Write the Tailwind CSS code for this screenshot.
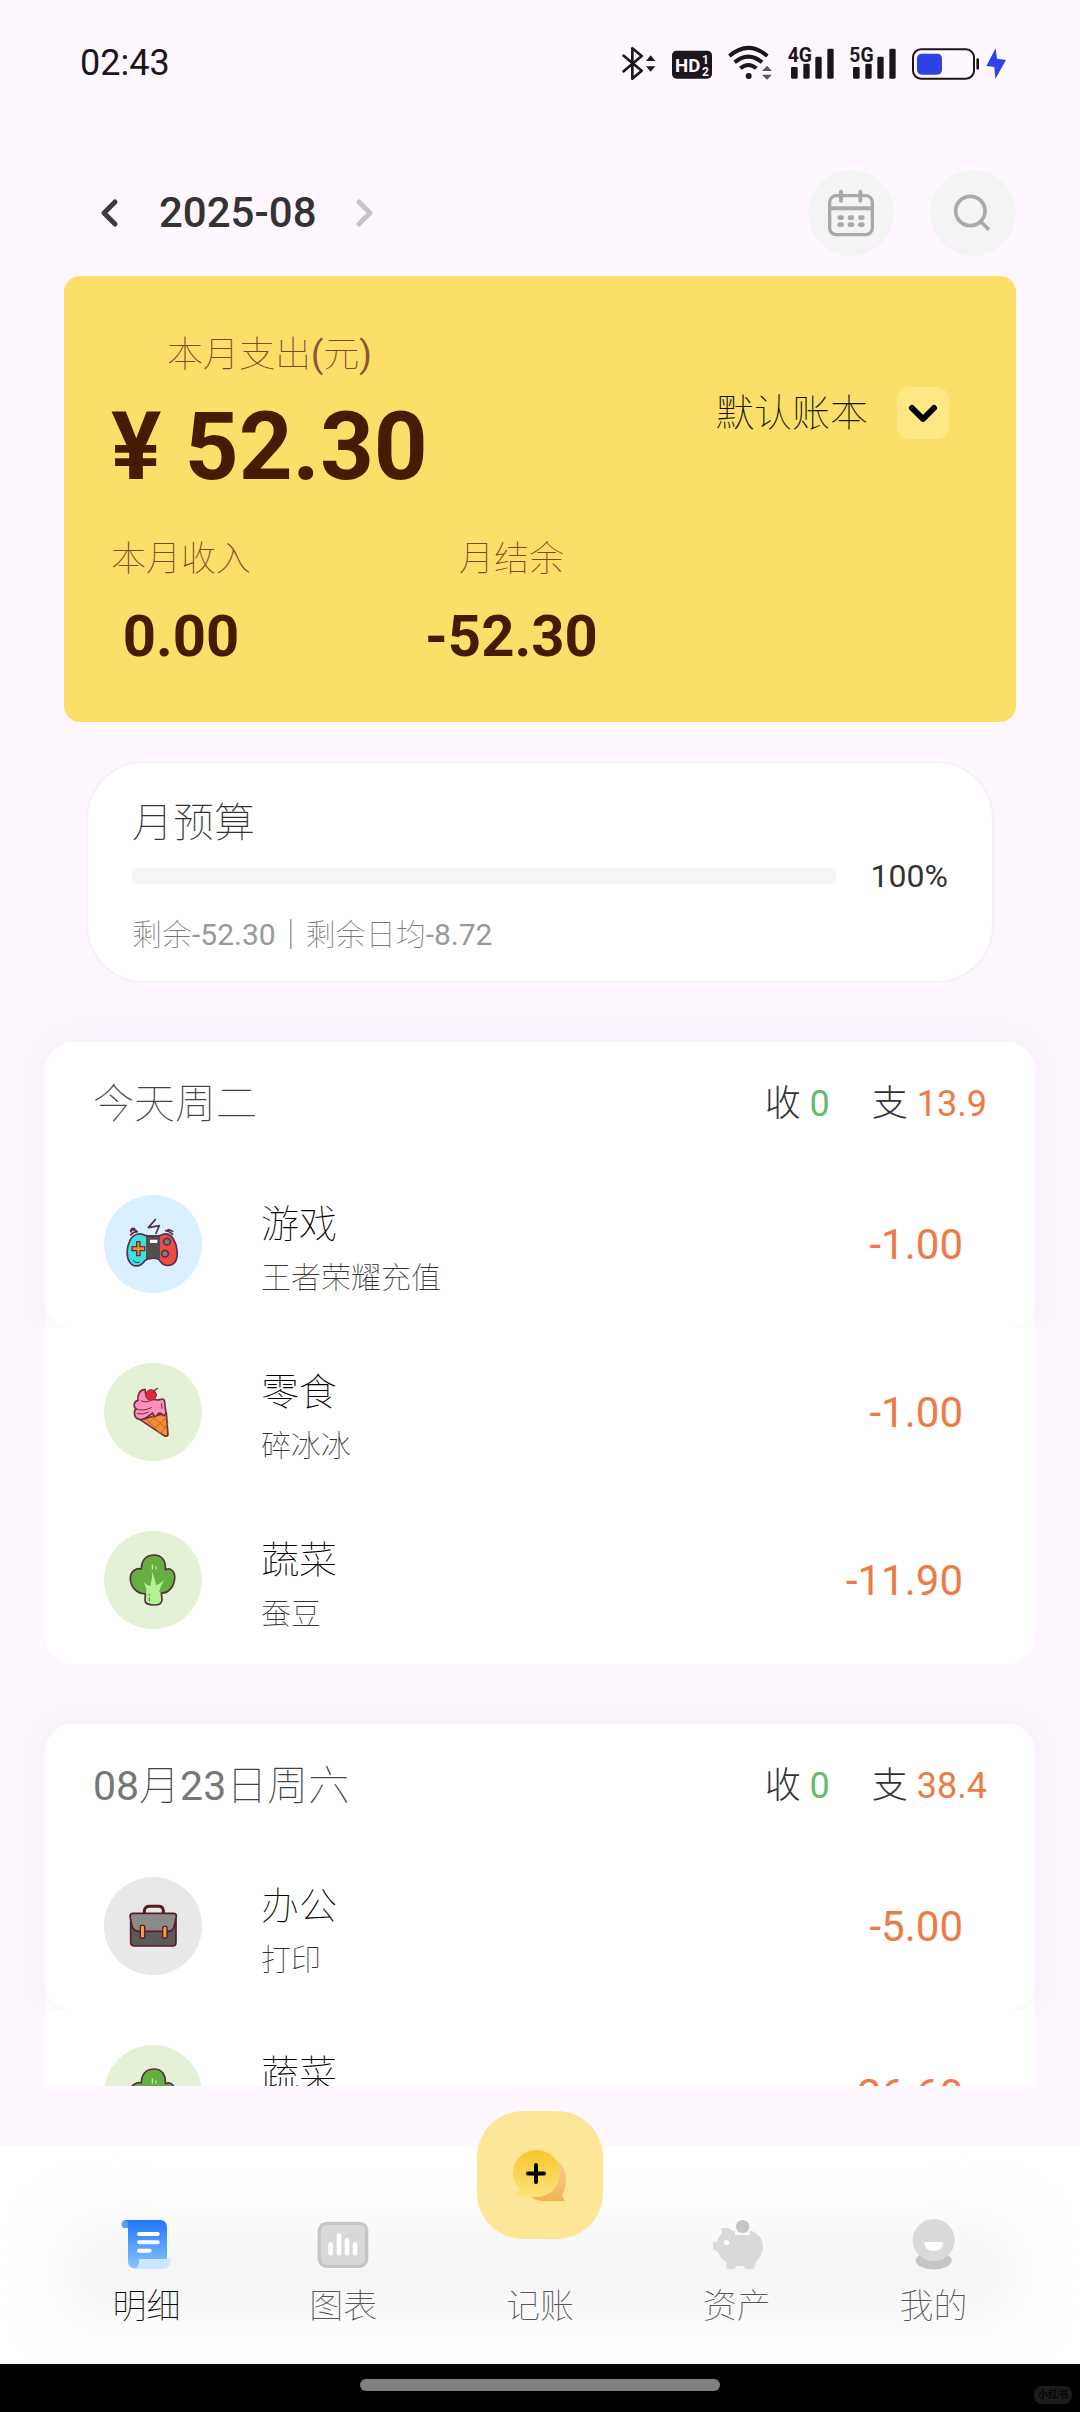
<!DOCTYPE html>
<html lang="zh-CN">
<head>
  <meta charset="UTF-8" />
  <meta name="viewport" content="width=device-width, initial-scale=1" />
  <title>记账</title>
  <script src="https://cdn.jsdelivr.net/npm/@tailwindcss/browser@4"></script>
</head>
<body class="h-screen flex flex-col overflow-hidden bg-[#fef7ff] font-['Roboto','Noto_Sans_CJK_SC',sans-serif] text-[#333333]">

  <!-- 图标 -->
  <svg class="hidden" aria-hidden="true">
    <symbol id="icon-broccoli" viewBox="72 1080 294 294">
      <path d="M196 1268C176 1270 152 1252 151 1224C150 1200 170 1190 184 1194C184 1166 200 1152 222 1152C246 1152 258 1170 256 1196C272 1188 286 1202 284 1222C282 1250 262 1268 244 1266L246 1296Q220 1306 195 1296Z" fill="#66ad42" />
      <path d="M197 1266Q204 1258 190 1232Q204 1246 211 1244Q217 1222 217 1202Q224 1222 228 1242Q238 1240 254 1226Q240 1246 238 1262L246 1268L246 1296Q220 1306 195 1296Z" fill="#b4f096" />
      <path d="M217 1182V1194M228 1188V1194M208 1266V1290" fill="none" stroke="#b4f096" stroke-width="4" stroke-linecap="round" />
      <path d="M208 1268V1274M208 1279V1291" stroke="#3f7d3a" stroke-width="3" />
      <path d="M196 1268C176 1270 152 1252 151 1224C150 1200 170 1190 184 1194C184 1166 200 1152 222 1152C246 1152 258 1170 256 1196C272 1188 286 1202 284 1222C282 1250 262 1268 244 1266L246 1286Q246 1302 222 1302Q195 1302 195 1288Z" fill="none" stroke="#55323d" stroke-width="5" stroke-linejoin="round" />
    </symbol>
  </svg>

  <!-- 状态栏 -->
  <div class="flex h-[126px] shrink-0 items-center justify-between pl-20 pr-[73px] text-[#1a161c]">
    <span class="text-[36px]">02:43</span>
    <div class="flex items-center gap-[14px] font-bold">
      <svg class="h-9 w-[35px]" viewBox="60 70 105 108" fill="none" stroke="currentColor">
        <path d="M65 102L119 147L91 171V80L119 103L65 149" stroke-width="8" stroke-linejoin="round" stroke-linecap="round" />
        <path d="M132 118L146 101L160 118ZM132 134L146 150L160 134Z" fill="currentColor" stroke="none" />
      </svg>
      <svg class="h-9 w-[42px]" viewBox="210 70 126 108">
        <rect x="213" y="87" width="120" height="84" rx="14" fill="currentColor" />
        <g fill="#fef7ff">
          <text x="222" y="152" font-size="56">HD</text>
          <text x="303" y="126" font-size="36">1</text>
          <text x="303" y="162" font-size="36">2</text>
        </g>
      </svg>
      <svg class="h-9 w-[46px]" viewBox="384 70 138 108" fill="none" stroke="currentColor">
        <path d="M391 103Q448 54 505 103M407 122Q448 88 489 122M424 140Q448 120 472 140" stroke-width="12" />
        <circle cx="449" cy="163" r="9" fill="currentColor" stroke="none" />
        <path d="M489 148L504 132L519 148ZM489 159L504 174L519 159Z" fill="#5c585e" stroke="none" />
      </svg>
      <svg class="h-9 w-12" viewBox="558 70 144 108" fill="currentColor">
        <text x="560" y="121" font-size="58">4G</text>
        <rect x="570" y="136" width="20" height="35" rx="4" />
        <rect x="607" y="126" width="19" height="45" rx="4" />
        <rect x="643" y="105" width="19" height="66" rx="4" />
        <rect x="679" y="81" width="19" height="90" rx="4" />
      </svg>
      <svg class="h-9 w-12" viewBox="747 70 144 108" fill="currentColor">
        <text x="748" y="121" font-size="58">5G</text>
        <rect x="759" y="136" width="20" height="35" rx="4" />
        <rect x="796" y="126" width="19" height="45" rx="4" />
        <rect x="832" y="105" width="19" height="66" rx="4" />
        <rect x="868" y="81" width="19" height="90" rx="4" />
      </svg>
      <svg class="h-9 w-24" viewBox="933 70 288 108">
        <rect x="939" y="83" width="183" height="88" rx="24" fill="none" stroke="currentColor" stroke-width="6" />
        <rect x="951" y="96" width="75" height="63" rx="14" fill="#2e42e6" />
        <rect x="1129" y="110" width="8" height="34" rx="4" fill="currentColor" />
        <path d="M1187 80L1159 133L1183 136L1186 172L1218 115L1191 111Z" fill="#2e42e6" />
      </svg>
    </div>
  </div>

  <!-- 月份切换 -->
  <header class="mt-11 mb-5 flex shrink-0 items-center justify-between pl-[94px] pr-16">
    <div class="flex items-center gap-[33px]">
      <button type="button" aria-label="上个月" class="text-[#3c3c44]">
        <svg class="h-8 w-8" viewBox="0 0 32 32" fill="none" stroke="currentColor" stroke-width="5" stroke-linecap="round" stroke-linejoin="round"><path d="M21 5L10 16L21 27" /></svg>
      </button>
      <h1 class="text-[42px] font-medium leading-[48px]">2025-08</h1>
      <button type="button" aria-label="下个月" class="text-[#c6c4ca]">
        <svg class="h-8 w-8" viewBox="0 0 32 32" fill="none" stroke="currentColor" stroke-width="5" stroke-linecap="round" stroke-linejoin="round"><path d="M9 5L20 16L9 27" /></svg>
      </button>
    </div>
    <div class="flex gap-9 text-[#a9a9a9]">
      <button type="button" aria-label="日历" class="h-[86px] w-[86px] rounded-full bg-[#f4f4f4]">
        <svg class="h-full w-full" viewBox="84 90 258 258" fill="none" stroke="currentColor" stroke-width="10" stroke-linecap="round">
          <rect x="149" y="167" width="128" height="117" rx="20" />
          <path d="M150 205H276M183 155V182M241 155V182" stroke-width="12" />
          <path d="M179 233H185M210 233H216M241 233H247M179 254H185M210 254H216M241 254H247" stroke-width="14" />
        </svg>
      </button>
      <button type="button" aria-label="搜索" class="h-[86px] w-[86px] rounded-full bg-[#f4f4f4]">
        <svg class="h-full w-full" viewBox="449 90 258 258" fill="none" stroke="currentColor" stroke-width="11">
          <circle cx="570" cy="213" r="44" />
          <path d="M602 246L626 269" />
        </svg>
      </button>
    </div>
  </header>

  <!-- 本月汇总 -->
  <section class="mx-16 shrink-0 rounded-2xl bg-[#fcdf69] pt-[55px] pb-[54px] pl-[47px] pr-[67px] text-[#7c4628]">
    <div class="flex items-center justify-between">
      <div class="text-center">
        <p class="text-[36px] font-thin leading-[48px]">本月支出<span class="font-normal text-[#8a5634]">(</span>元<span class="font-normal text-[#8a5634]">)</span></p>
        <p class="mt-5 text-[94px] font-bold leading-[96px] text-[#471a02]">¥ 52.30</p>
      </div>
      <div class="relative text-[#111111]">
        <select aria-label="账本" class="h-[52px] appearance-none bg-transparent pr-[80px] text-[38px] font-thin leading-[52px] outline-none">
          <option>默认账本</option>
        </select>
        <span class="pointer-events-none absolute top-0 right-0 flex h-[52px] w-[52px] items-center justify-center rounded-xl bg-[#ffe883]">
          <svg class="h-8 w-8" viewBox="0 0 32 32" fill="none" stroke="#000000" stroke-width="6" stroke-linecap="round" stroke-linejoin="round"><path d="M5 11L16 22L27 11" /></svg>
        </span>
      </div>
    </div>
    <div class="mt-[41px] flex gap-[174px] text-center">
      <div>
        <p class="text-[35px] font-thin leading-[48px]">本月收入</p>
        <p class="mt-5 text-[58px] font-bold leading-[64px] text-[#471a02]">0.00</p>
      </div>
      <div>
        <p class="text-[35px] font-thin leading-[48px]">月结余</p>
        <p class="mt-5 text-[58px] font-bold leading-[64px] text-[#471a02]">-52.30</p>
      </div>
    </div>
  </section>

  <!-- 月预算 -->
  <section class="mx-[86px] mt-[39px] shrink-0 rounded-[58px] border-2 border-[#f5f1f6] bg-white px-11 pt-8 pb-[26px]">
    <h2 class="text-[41px] font-thin leading-14">月预算</h2>
    <div class="mt-[5px] flex items-center gap-[35px]">
      <div role="progressbar" aria-label="月预算" aria-valuenow="0" aria-valuemin="0" aria-valuemax="100" class="h-4 flex-1 rounded-full bg-[#f6f6f6]"></div>
      <span class="text-[32px] leading-10">100%</span>
    </div>
    <p class="mt-[19px] text-[30px] leading-10 text-[#999999]"><span class="font-thin text-[#777777]">剩余</span>-52.30<span class="font-thin text-[#777777]">｜剩余日均</span>-8.72</p>
  </section>

  <!-- 明细列表 -->
  <main class="min-h-0 flex-1 overflow-hidden px-[45px] pt-[59px]">
    <section class="mb-[60px] rounded-[28px] bg-white">
      <div class="rounded-[28px] bg-white shadow-[0_0_40px_rgba(60,0,100,0.05)]">
        <div class="flex items-center justify-between px-12 pt-8 pb-[26px] leading-[60px]">
          <h2 class="text-[41px] font-thin text-[#444444]">今天周二</h2>
          <p class="flex gap-[42px] text-[36px]">
            <span><span class="font-light">收</span> <span class="text-[#66bb6a]">0</span></span>
            <span><span class="font-light">支</span> <span class="text-[#ec7b45]">13.9</span></span>
          </p>
        </div>
        <div class="flex h-[168px] items-center pl-[59px] pr-[72px]">
          <span class="h-[98px] w-[98px] rounded-full bg-[#dbf0ff]">
            <svg viewBox="72 72 294 294" stroke="#57314a" stroke-linejoin="round" stroke-linecap="round">
              <path d="M198 194C180 184 160 188 150 208C140 228 138 256 148 272C160 292 182 286 192 272Q200 262 216 262Q234 260 242 272C252 286 274 288 286 272C296 256 292 222 280 204C270 186 254 186 240 194Q220 198 198 194Z" fill="#ee4c41" stroke="none" />
              <path d="M198 194C180 184 160 188 150 208C140 228 138 256 148 272C160 292 182 286 198 264Z" fill="#3fe0e0" stroke="none" />
              <path d="M198 192H240V266Q220 258 198 266Z" fill="#54504f" stroke="none" />
              <path d="M198 194C180 184 160 188 150 208C140 228 138 256 148 272C160 292 182 286 192 272Q200 262 216 262Q234 260 242 272C252 286 274 288 286 272C296 256 292 222 280 204C270 186 254 186 240 194Q220 198 198 194Z" fill="none" stroke-width="5" />
              <path d="M170 212H180V227H194V239H180V254H170V239H156V227H170Z" fill="#f58a24" stroke-width="4" />
              <circle cx="261" cy="212" r="10" fill="#817b80" stroke-width="5" />
              <circle cx="255" cy="248" r="10" fill="#817b80" stroke-width="5" />
              <rect x="210" y="206" width="22" height="10" rx="2" fill="#ffffff" stroke="none" />
              <path d="M152 182Q158 174 168 178M152 192Q160 182 172 182M152 178Q156 170 164 173M257 179Q268 180 278 190M264 176Q272 177 278 181M228 187L238 164L205 170L226 146" fill="none" stroke-width="5" />
              <path d="M160 268Q166 278 178 274" fill="none" stroke-width="3" />
            </svg>
          </span>
          <div class="ml-[59px] flex-1 pt-[11px] font-thin">
            <h3 class="text-[38px] leading-14 text-black">游戏</h3>
            <p class="text-[30px] leading-[52px] text-[#333333]">王者荣耀充值</p>
          </div>
          <span class="text-[42px] text-[#ec7b45]">-1.00</span>
        </div>
      </div>
      <div class="relative flex h-[168px] items-center bg-white pl-[59px] pr-[72px]">
        <span class="h-[98px] w-[98px] rounded-full bg-[#e5f1d7]">
          <svg viewBox="72 576 294 294" stroke="#6b3040" stroke-linejoin="round" stroke-linecap="round">
            <path d="M180 746L259 726L264 792Q260 798 252 794Z" fill="#f38f37" stroke-width="5" />
            <path d="M196 742L240 786M216 736L261 774M204 758L234 730M224 772L262 738M242 788L264 756" fill="none" stroke="#c8622b" stroke-width="3" />
            <path d="M196 656C178 654 172 674 174 688C160 690 160 708 168 714C160 720 162 742 176 744Q186 750 202 738Q212 730 218 726Q222 742 232 732Q236 722 246 730Q254 740 258 724Q254 704 254 692Q252 680 240 686Q222 690 204 676Q194 668 196 656Z" fill="#ff8fbb" stroke-width="5" />
            <path d="M184 690Q198 696 210 690M168 714Q190 722 214 710M172 728Q190 732 204 724M244 698L246 712" fill="none" stroke-width="3" />
            <circle cx="213" cy="672" r="16" fill="#ed2636" stroke-width="3" />
            <path d="M220 664Q224 656 232 652" fill="none" stroke-width="4" />
          </svg>
        </span>
        <div class="ml-[59px] flex-1 pt-[11px] font-thin">
          <h3 class="text-[38px] leading-14 text-black">零食</h3>
          <p class="text-[30px] leading-[52px] text-[#333333]">碎冰冰</p>
        </div>
        <span class="text-[42px] text-[#ec7b45]">-1.00</span>
      </div>
      <div class="relative flex h-[168px] items-center rounded-b-[28px] bg-white pl-[59px] pr-[72px]">
        <span class="h-[98px] w-[98px] rounded-full bg-[#e5f1d7]">
          <svg class="h-full w-full"><use href="#icon-broccoli" /></svg>
        </span>
        <div class="ml-[59px] flex-1 pt-[11px] font-thin">
          <h3 class="text-[38px] leading-14 text-black">蔬菜</h3>
          <p class="text-[30px] leading-[52px] text-[#333333]">蚕豆</p>
        </div>
        <span class="text-[42px] text-[#ec7b45]">-11.90</span>
      </div>
    </section>

    <section class="rounded-[28px] bg-white">
      <div class="rounded-[28px] bg-white shadow-[0_0_40px_rgba(60,0,100,0.05)]">
        <div class="flex items-center justify-between px-12 pt-8 pb-[26px] leading-[60px]">
          <h2 class="text-[41px] text-[#777777]">08<span class="font-thin text-[#444444]">月</span>23<span class="font-thin text-[#444444]">日周六</span></h2>
          <p class="flex gap-[42px] text-[36px]">
            <span><span class="font-light">收</span> <span class="text-[#66bb6a]">0</span></span>
            <span><span class="font-light">支</span> <span class="text-[#ec7b45]">38.4</span></span>
          </p>
        </div>
        <div class="flex h-[168px] items-center pl-[59px] pr-[72px]">
          <span class="h-[98px] w-[98px] rounded-full bg-[#e8e8e8]">
            <svg viewBox="132 54 294 294" stroke="#571c24" stroke-linejoin="round">
              <path d="M253 162V154Q256 142 268 142H296Q308 142 310 154V162" fill="none" stroke-width="9" />
              <path d="M212 180V250Q212 261 224 261H338Q348 261 348 250V180Z" fill="#5c5b5b" stroke-width="5" />
              <path d="M210 172Q210 163 220 163H340Q350 163 349 172L342 204Q338 216 324 217H234Q220 214 216 202Z" fill="#8b8a8a" stroke-width="5" />
              <rect x="241" y="199" width="13" height="38" rx="4" fill="#f3a04c" stroke-width="4" />
              <rect x="308" y="202" width="13" height="35" rx="4" fill="#f3a04c" stroke-width="4" />
            </svg>
          </span>
          <div class="ml-[59px] flex-1 pt-[11px] font-thin">
            <h3 class="text-[38px] leading-14 text-black">办公</h3>
            <p class="text-[30px] leading-[52px] text-[#333333]">打印</p>
          </div>
          <span class="text-[42px] text-[#ec7b45]">-5.00</span>
        </div>
      </div>
      <div class="relative flex h-[168px] items-center bg-white pl-[59px] pr-[72px]">
        <span class="h-[98px] w-[98px] rounded-full bg-[#e5f1d7]">
          <svg class="h-full w-full"><use href="#icon-broccoli" /></svg>
        </span>
        <div class="ml-[59px] flex-1 pt-[11px] font-thin">
          <h3 class="text-[38px] leading-14 text-black">蔬菜</h3>
          <p class="text-[30px] leading-[52px]">&nbsp;</p>
        </div>
        <span class="text-[42px] text-[#ec7b45]">-26.60</span>
      </div>
    </section>
  </main>

  <!-- 底部导航 -->
  <nav class="relative mt-[60px] shrink-0 bg-white px-12 pt-[72px] pb-[38px]">
    <div class="absolute inset-x-16 top-20 bottom-12 rounded-[40px] bg-[#f5f5f5] blur-[28px]"></div>
    <ul class="relative grid grid-cols-5 text-[34px] font-thin leading-10 text-[#555555]">
      <li>
        <a href="#detail" aria-current="page" class="flex flex-col items-center gap-4 text-black">
          <svg class="h-[52px] w-[52px]" viewBox="240 114 156 156">
            <defs>
              <linearGradient id="doc" x1="0" y1="0" x2="0" y2="1"><stop offset="0" stop-color="#1f76fb" /><stop offset="1" stop-color="#8cc4fd" /></linearGradient>
            </defs>
            <path d="M257 120H362Q381 122 381 142V244H300Q300 264 284 266Q264 264 264 244V144H254Q245 142 245 132Q246 122 257 120Z" fill="url(#doc)" />
            <path d="M264 144H254Q245 142 245 132Q246 122 257 120Q264 124 264 132Z" fill="#5a9ffb" />
            <path d="M298 237H391Q394 264 370 267H284Q298 262 298 237Z" fill="#cbe6ff" />
            <path d="M297 162H353M297 187H353M297 212H329" stroke="#ffffff" stroke-width="12" stroke-linecap="round" />
          </svg>
          明细
        </a>
      </li>
      <li>
        <a href="#chart" class="flex flex-col items-center gap-4">
          <svg class="h-[52px] w-[52px]" viewBox="835 114 156 156">
            <rect x="842" y="130" width="142" height="129" rx="22" fill="#d6d8d9" stroke="#c3c5c7" stroke-width="10" />
            <path d="M876 193V220M901 167V220M925 180V220M949 193V220" stroke="#ffffff" stroke-width="14" stroke-linecap="round" />
          </svg>
          图表
        </a>
      </li>
      <li>
        <a href="#add" class="flex flex-col items-center pt-[68px]">
          <span class="absolute -top-[107px] h-32 w-[126px] rounded-[46px] bg-[#fee699]">
            <svg class="h-full w-full" viewBox="477 2111 126 128">
              <defs>
                <linearGradient id="coin" x1="0" y1="0" x2="0" y2="1"><stop offset="0" stop-color="#f8c62c" /><stop offset="1" stop-color="#fde27c" /></linearGradient>
                <linearGradient id="coin-shade" x1="0" y1="0" x2="0" y2="1"><stop offset="0" stop-color="#f8d090" /><stop offset="1" stop-color="#f2b254" /></linearGradient>
              </defs>
              <path d="M555 2159Q566 2166 566 2178Q566 2188 562 2195L565 2201H542Q534 2200 530 2196Z" fill="url(#coin-shade)" />
              <path d="M513 2173A23.500 23.500 0 1 1 536 2197H516L519 2188Q513 2182 513 2173Z" fill="url(#coin)" />
              <path d="M536 2165V2182M528 2173.500H544" stroke="#000000" stroke-width="4" stroke-linecap="round" />
            </svg>
          </span>
          记账
        </a>
      </li>
      <li>
        <a href="#assets" class="flex flex-col items-center gap-4">
          <svg class="h-[52px] w-[52px]" viewBox="710 2218 52 52" fill="#d8dadc">
            <path d="M720 2228H727Q730 2229 731 2231L734 2231V2235H749L748 2231.500L751 2231Q762 2236 762 2247Q761 2256 755 2262L753 2269H744L743 2266H735L734 2269H725.500L725 2262Q719 2258 717 2252L712 2249V2242H716Q717 2236 721 2234Z" />
            <circle cx="741.600" cy="2226.500" r="6.600" fill="#c3c5c7" />
            <circle cx="725.500" cy="2242.500" r="2.600" fill="#ffffff" />
          </svg>
          资产
        </a>
      </li>
      <li>
        <a href="#me" class="flex flex-col items-center gap-4">
          <svg class="h-[52px] w-[52px]" viewBox="908 2218 52 52">
            <ellipse cx="933.700" cy="2260.500" rx="18" ry="9" fill="#c3c5c7" />
            <circle cx="933.700" cy="2240" r="21" fill="#d8dadc" />
            <path d="M924.500 2242H943Q943 2251 933.700 2251Q924.500 2251 924.500 2242Z" fill="#ffffff" />
          </svg>
          我的
        </a>
      </li>
    </ul>
  </nav>

  <!-- 手势条 -->
  <footer class="relative flex h-12 shrink-0 items-center justify-center bg-black pb-1.5">
    <div class="h-3 w-1/3 rounded-full bg-[#808080]"></div>
    <span class="absolute right-2 bottom-2 rounded-lg bg-[#1c1c1c] px-1 text-[10px] font-bold leading-[18px] text-[#050505]">小红书</span>
  </footer>

</body>
</html>
